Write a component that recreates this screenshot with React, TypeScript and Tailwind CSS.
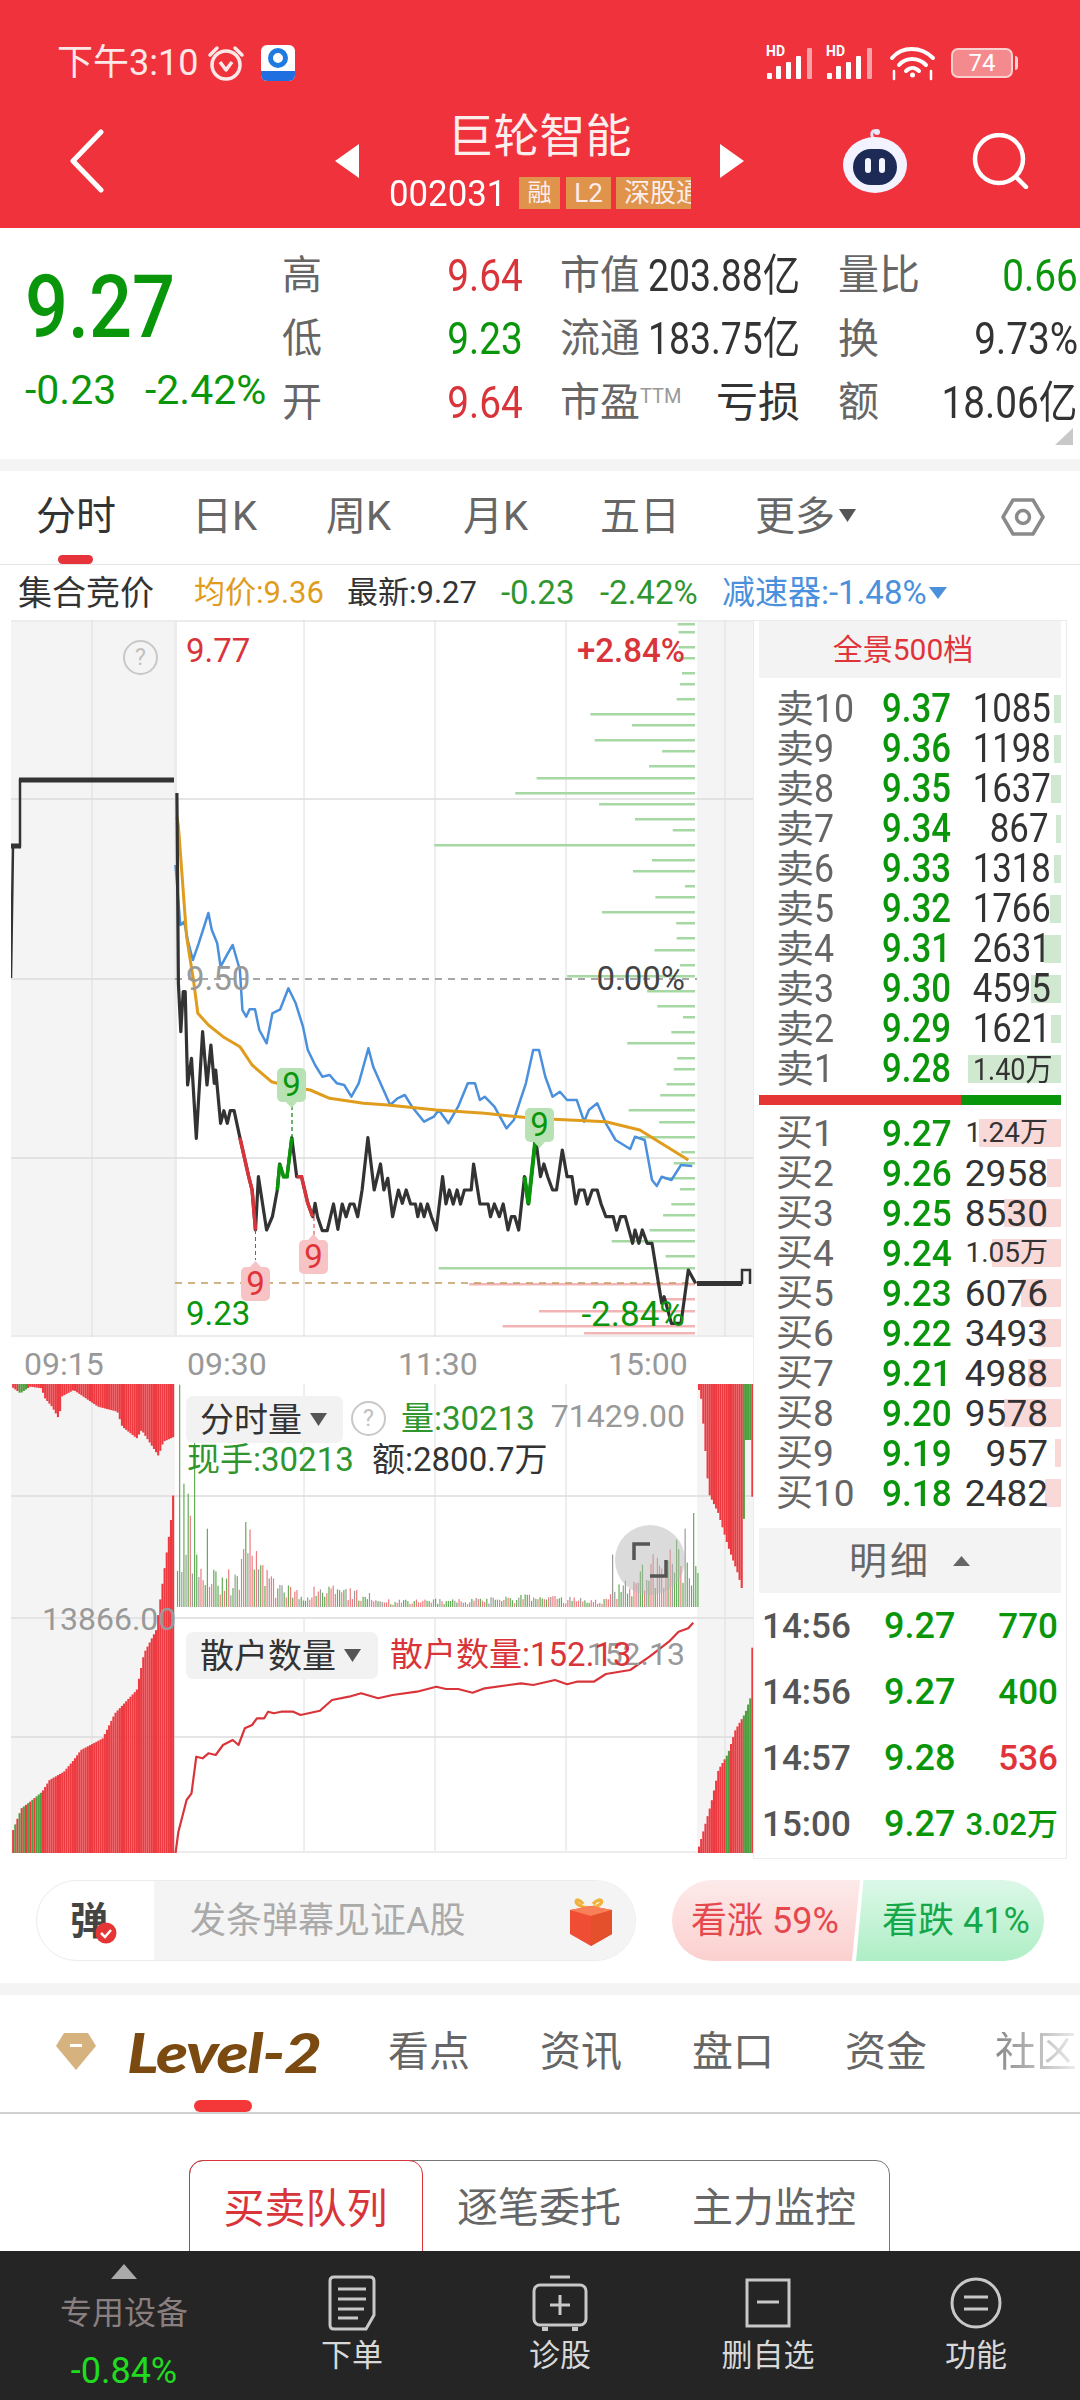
import clsx from "clsx";
import type { ReactNode } from "react";

type Pt = [number, number];

const RED = "text-[#e0343a]";
const GREEN = "text-[#0a960a]";

// chart points are read off the zoomed reference, so they get scaled back here
const priceX = (x: number) => x / 2.063 - 11;
const priceY = (y: number) => 330 + y / 3;
const toPrice = (pts: Pt[]) => pts.map(([x, y]) => `${priceX(x).toFixed(1)},${priceY(y).toFixed(1)}`).join(" ");
const lowY = (y: number) => y / 3 - 14;
const toLow = (pts: Pt[]) => pts.map(([x, y]) => `${priceX(x).toFixed(1)},${lowY(y).toFixed(1)}`).join(" ");

const blackLine: Pt[] = [[365,-471],[368,100],[373,245],[378,125],[382,125],[387,405],[395,325],[405,565],[418,245],[427,405],[435,285],[442,400],[445,360],[455,520],[462,482],[469,520],[475,482],[483,482],[495,563],[513,680],[520,720],[527,840],[533,680],[550,840],[562,800],[572,720],[577,642],[585,680],[592,680],[602,563],[612,680],[622,680],[635,760],[645,800],[650,760],[655,800],[665,842],[675,842],[688,762],[697,838],[706,762],[714,800],[722,762],[730,762],[738,800],[747,720],[759,563],[772,720],[785,642],[792,720],[800,685],[810,800],[822,720],[830,760],[838,720],[847,762],[857,762],[862,800],[868,762],[875,800],[882,762],[890,800],[900,840],[913,680],[920,762],[927,720],[935,762],[943,720],[950,762],[958,720],[972,720],[977,642],[990,762],[1007,762],[1012,800],[1020,762],[1030,800],[1038,762],[1048,840],[1055,800],[1062,800],[1070,840],[1082,680],[1090,762],[1105,563],[1115,680],[1122,642],[1130,680],[1140,720],[1148,720],[1160,600],[1170,680],[1180,680],[1188,762],[1195,720],[1205,720],[1212,762],[1222,720],[1232,720],[1240,762],[1250,800],[1265,800],[1272,840],[1280,800],[1290,800],[1305,880],[1310,840],[1318,880],[1325,840],[1335,880],[1345,880],[1365,1060],[1370,1040],[1385,1120],[1405,1120],[1420,960],[1435,1000]];
const blueLine: Pt[] = [[362,-255],[372,-75],[380,-85],[388,-25],[398,30],[410,-20],[430,-111],[437,-60],[448,-20],[455,50],[470,10],[480,-15],[495,60],[500,180],[508,200],[515,178],[526,178],[535,240],[550,280],[562,190],[578,178],[595,115],[610,160],[625,230],[635,300],[650,345],[665,380],[680,375],[695,400],[710,405],[725,440],[740,400],[760,295],[770,350],[785,400],[805,465],[820,445],[835,435],[850,470],[875,515],[895,500],[905,480],[925,520],[945,470],[965,400],[980,400],[990,450],[1000,440],[1020,470],[1045,535],[1060,510],[1085,400],[1100,300],[1112,300],[1125,380],[1140,440],[1155,425],[1170,450],[1190,450],[1205,515],[1215,480],[1232,460],[1250,520],[1270,570],[1300,597],[1310,560],[1330,570],[1345,690],[1355,708],[1365,680],[1385,690],[1405,645],[1428,648]];
const avgLine: Pt[] = [[365,-400],[368,-372],[385,-40],[400,100],[408,190],[430,225],[460,260],[495,290],[520,345],[560,395],[600,410],[640,420],[680,445],[750,460],[800,465],[900,480],[1000,490],[1100,505],[1250,515],[1320,540],[1370,585],[1420,630]];
const retailLine: Pt[] = [[362,1450],[368,1385],[385,1290],[395,1270],[405,1160],[418,1165],[430,1150],[445,1155],[460,1125],[480,1110],[492,1125],[505,1075],[520,1065],[530,1045],[545,1045],[553,1025],[565,1030],[580,1025],[605,1025],[620,1035],[660,1022],[685,990],[720,980],[745,970],[780,985],[810,975],[860,965],[900,950],[920,957],[945,957],[975,968],[1000,955],[1050,945],[1075,940],[1100,945],[1145,930],[1170,943],[1190,935],[1225,935],[1250,912],[1300,900],[1340,860],[1380,815],[1400,785],[1420,775],[1430,758]];

// [left edge, y] of the thin depth bars, all ending at the same right edge
const greenDepth: Pt[] = [[1398,3],[1400,11],[1400,26],[1400,37],[1407,52],[1403,63],[1396,78],[1218,93],[1304,104],[1227,119],[1366,130],[1339,145],[1107,157],[1063,172],[1236,183],[1310,198],[1388,209],[896,224],[1345,239],[1306,250],[1413,265],[1352,276],[1242,291],[1395,302],[1396,317],[1350,329],[1403,344],[1170,355],[1335,370],[1356,385],[1409,396],[1385,411],[1294,422],[1397,437],[1390,448],[1375,463],[1362,474],[1297,489],[1360,501],[1320,516],[1405,531],[1390,542],[1370,557],[1403,568],[1385,583],[1368,594],[1340,609],[1262,620],[1373,635],[905,647]];
const redDepth: Pt[] = [[968,663],[1370,678],[1112,690],[1037,705],[1205,712]];

const interp = (table: Pt[], x: number) => {
  if (x <= table[0][0]) return table[0][1];
  for (let i = 1; i < table.length; i++) {
    if (x <= table[i][0]) {
      const [x0, y0] = table[i - 1];
      const [x1, y1] = table[i];
      return y0 + ((y1 - y0) * (x - x0)) / (x1 - x0);
    }
  }
  return table[table.length - 1][1];
};

let seed = 77;
const rnd = () => {
  seed = (seed * 16807) % 2147483647;
  return seed / 2147483647;
};

const volEnvelope: Pt[] = [[365,360],[400,250],[420,190],[450,120],[480,110],[510,250],[530,190],[560,90],[620,60],[680,70],[760,45],[810,22],[900,25],[1020,30],[1080,40],[1180,30],[1250,30],[1262,50],[1300,100],[1350,170],[1400,210],[1420,130]];
const volBars = Array.from({ length: 245 }, (_, i) => {
  const x = 365 + i * 4.4;
  const h = interp(volEnvelope, x) * (0.3 + 0.7 * rnd());
  const pick = rnd();
  return { x, h, color: pick < 0.42 ? "#62ad55" : pick < 0.78 ? "#ee7c7f" : "#9a9a9a" };
});
[[368,667],[378,370],[388,340],[400,547],[426,235],[507,255],[1262,157],[1430,282],[1411,235]].forEach(([x, h]) => {
  const bar = volBars.reduce((a, b) => (Math.abs(b.x - x) < Math.abs(a.x - x) ? b : a));
  bar.h = h;
  bar.color = x < 1000 || x === 1430 ? "#62ad55" : "#9a9a9a";
});

const leftTop: Pt[] = [[22,50],[40,70],[60,50],[85,55],[88,80],[105,110],[120,148],[125,80],[150,60],[170,80],[200,110],[240,125],[250,170],[280,205],[290,180],[310,225],[325,258],[335,215],[358,200]];
const leftBottom: Pt[] = [[25,1380],[42,1315],[60,1295],[85,1265],[100,1230],[130,1205],[150,1170],[165,1140],[210,1105],[235,1030],[280,960],[295,850],[320,780],[335,620],[350,460],[356,360]];
const rightTop: Pt[] = [[1440,60],[1445,90],[1460,370],[1480,430],[1500,530],[1520,610],[1530,665],[1535,210],[1548,210],[1550,380]];
const rightBottom: Pt[] = [[1440,1430],[1465,1300],[1480,1200],[1500,1150],[1515,1080],[1535,1030],[1548,975],[1553,620]];

const columns = (from: number, to: number) => {
  const out: number[] = [];
  for (let x = from; x <= to; x += 4.4) out.push(x);
  return out;
};

function GridLines({ rows }: { rows: number[] }) {
  return (
    <>
      {[81, 293, 424, 555, 714].map((x) => (
        <line key={x} x1={x} x2={x} y1="0" y2="100%" stroke="#dedede" strokeWidth="1" />
      ))}
      {rows.map((y) => (
        <line key={y} x1="0" x2="742" y1={y} y2={y} stroke="#dcdcdc" strokeWidth="1.5" />
      ))}
    </>
  );
}

function Marker({ x, y, up, green }: { x: number; y: number; up?: boolean; green?: boolean }) {
  // rounded tag with a small nib, the digit is laid over it as real text
  const fill = green ? "#b9e2b4" : "#f7c3c5";
  return (
    <g>
      <rect x={x} y={y} width="29" height="34" rx="5" fill={fill} />
      {up ? (
        <polygon points={`${x + 9},${y} ${x + 14.5},${y - 6} ${x + 20},${y}`} fill={fill} />
      ) : (
        <polygon points={`${x + 9},${y + 34} ${x + 14.5},${y + 40} ${x + 20},${y + 34}`} fill={fill} />
      )}
      <text x={x + 14.5} y={y + 28} textAnchor="middle" fontSize="33" fontFamily="Roboto, sans-serif" fill={green ? "#0a960a" : "#e0343a"}>
        9
      </text>
    </g>
  );
}

function PriceChart() {
  return (
    <svg className="absolute inset-0" width="742" height="717" viewBox="0 0 742 717">
      <rect x="0" y="0" width="164" height="717" fill="#f4f4f4" />
      <rect x="686" y="0" width="56" height="717" fill="#f4f4f4" />
      <rect x="0" y="0" width="742" height="2" fill="#ececec" />
      <rect x="0" y="715" width="742" height="2" fill="#ececec" />
      <rect x="163" y="0" width="3" height="717" fill="#ececec" />
      <GridLines rows={[179, 538]} />
      <line x1="0" x2="164" y1="359" y2="359" stroke="#dcdcdc" strokeWidth="1.5" />
      {greenDepth.map(([x, y]) => (
        <rect key={y} x={priceX(x)} y={y} width={684 - priceX(x)} height="2.5" fill="#a5d8a3" />
      ))}
      {redDepth.map(([x, y]) => (
        <rect key={y} x={priceX(x)} y={y} width={684 - priceX(x)} height="2.5" fill="#f3b4b6" />
      ))}
      <line x1="164" x2="686" y1="359" y2="359" stroke="#8a8a8a" strokeWidth="1.5" strokeDasharray="7 6" />
      <line x1="164" x2="686" y1="663" y2="663" stroke="#c49a60" strokeWidth="1.5" strokeDasharray="7 6" />

      <polyline points={toPrice(blueLine)} fill="none" stroke="#4a90dc" strokeWidth="2.5" strokeLinejoin="round" />
      <polyline points={toPrice(avgLine)} fill="none" stroke="#e09c1c" strokeWidth="3" strokeLinejoin="round" />
      <polyline points={toPrice(blackLine)} fill="none" stroke="#333333" strokeWidth="3.2" strokeLinejoin="round" />
      <polyline points={toPrice(blackLine.filter(([x]) => x >= 495 && x <= 527))} fill="none" stroke="#d8343a" strokeWidth="3.5" />
      <polyline points={toPrice(blackLine.filter(([x]) => x >= 612 && x <= 645))} fill="none" stroke="#d8343a" strokeWidth="3.5" />
      <polyline points={toPrice(blackLine.filter(([x]) => x >= 572 && x <= 602))} fill="none" stroke="#0a960a" strokeWidth="3.5" />
      <polyline points={toPrice(blackLine.filter(([x]) => x >= 1082 && x <= 1105))} fill="none" stroke="#0a960a" strokeWidth="4" />

      {/* pre-market auction steps */}
      <polyline points="0,358 2,226 9,226 9,160 163,160" fill="none" stroke="#333333" strokeWidth="2.5" />
      <rect x="8" y="157.5" width="155" height="5" fill="#333333" />
      <rect x="0" y="223.5" width="10" height="5" fill="#333333" />

      {/* after-hours stub */}
      <polyline points="686,663 731,663 731,650 739,650 739,664" fill="none" stroke="#333333" strokeWidth="2.5" />
      <rect x="686" y="661" width="45" height="5" fill="#333333" />

      <line x1="281" x2="281" y1="486" y2="517" stroke="#3a9a3a" strokeWidth="1.5" strokeDasharray="4 3" />
      <line x1="244.5" x2="244.5" y1="610" y2="640" stroke="#d8343a" strokeWidth="1" strokeDasharray="4 3" />
      <line x1="303" x2="303" y1="597" y2="616" stroke="#d8343a" strokeWidth="1" strokeDasharray="4 3" />
      <Marker x={266} y={448} green />
      <Marker x={514} y={488} green />
      <Marker x={230} y={647} up />
      <Marker x={288} y={620} up />
    </svg>
  );
}

function VolumeChart() {
  return (
    <svg className="absolute inset-0" width="742" height="469" viewBox="0 0 742 469">
      <rect x="0" y="0" width="164" height="469" fill="#f4f4f4" />
      <rect x="686" y="0" width="56" height="469" fill="#f4f4f4" />
      <GridLines rows={[112, 353]} />
      <rect x="0" y="233" width="742" height="2" fill="#e4e4e4" />
      <rect x="164" y="222" width="522" height="11" fill="#ffffff" />
      <rect x="0" y="467" width="742" height="2" fill="#ececec" />

      {columns(25, 356).map((x) => (
        <g key={x}>
          <rect x={priceX(x)} y="0" width="2.1" height={Math.max(lowY(interp(leftTop, x)), 0)} fill={x > 38 && x < 52 ? "#4f9e3f" : "#ec3a40"} />
          <rect x={priceX(x)} y={lowY(interp(leftBottom, x))} width="2.1" height={469 - lowY(interp(leftBottom, x))} fill={x < 86 && x % 3 > 1 ? "#4f9e3f" : "#ec3a40"} />
        </g>
      ))}
      {columns(1440, 1553).map((x) => (
        <g key={x}>
          <rect x={priceX(x)} y="0" width="2.1" height={Math.max(lowY(interp(rightTop, x)), 0)} fill={x > 1532 && x < 1549 ? "#4f9e3f" : "#ec3a40"} />
          <rect x={priceX(x)} y={lowY(interp(rightBottom, x))} width="2.1" height={469 - lowY(interp(rightBottom, x))} fill={(x > 1532 && x < 1549) || (x > 1495 && x < 1503) ? "#4f9e3f" : "#ec3a40"} />
        </g>
      ))}

      {volBars.map((b) => (
        <rect key={b.x} x={priceX(b.x)} y={223 - b.h / 3} width="1.2" height={b.h / 3} fill={b.color} />
      ))}
      <polyline points={toLow(retailLine)} fill="none" stroke="#d8343a" strokeWidth="2.2" strokeLinejoin="round" />
    </svg>
  );
}

function Caret({ className }: { className?: string }) {
  return (
    <svg width="17" height="13" viewBox="0 0 17 13" className={className}>
      <polygon points="0,0 17,0 8.5,13" fill="#555555" />
    </svg>
  );
}

function Help({ className }: { className?: string }) {
  return (
    <span className={clsx("flex h-[35px] w-[35px] items-center justify-center rounded-full border-[2.5px] border-[#c8c8c8] text-[23px] leading-none text-[#c0c0c0]", className)}>
      ?
    </span>
  );
}

function Signal() {
  return (
    <div className="relative h-[32px] w-[50px]">
      <span className="absolute left-0 top-[-3px] text-[14px] font-bold leading-none text-white">HD</span>
      <svg className="absolute inset-0" width="50" height="32" viewBox="0 0 50 32">
        <rect x="1" y="26" width="5" height="6" rx="1" fill="#fff" />
        <rect x="10" y="19" width="5" height="13" rx="1" fill="#fff" />
        <rect x="20" y="15" width="5" height="17" rx="1" fill="#fff" />
        <rect x="30" y="9" width="5" height="23" rx="1" fill="#fff" />
        <rect x="41" y="1" width="5" height="31" rx="1" fill="#ffffff" opacity="0.55" />
      </svg>
    </div>
  );
}

function StatusIcons() {
  return (
    <div className="flex items-center">
      <Signal />
      <div className="ml-[10px]">
        <Signal />
      </div>
      <svg className="ml-[13px]" width="48" height="36" viewBox="0 0 48 36" fill="none" stroke="#fff" strokeWidth="4" strokeLinecap="round">
        <path d="M3 13 C13 1 32 1 44 13" />
        <path d="M10 20 C17 12 29 12 37 20" />
        <path d="M17 26 C21 22 26 22 30 26" />
        <circle cx="23.5" cy="30" r="2.5" fill="#fff" stroke="none" />
        <path d="M5 26v8M42 26v8" strokeWidth="2.5" />
      </svg>
      <div className="ml-[14px] flex items-center">
        <div className="flex h-[30px] w-[62px] items-center justify-center rounded-[7px] border-[2.5px] border-[#f8d0d0] bg-[#f58a8e] text-[24px] leading-none text-white">74</div>
        <span className="ml-[2px] h-[14px] w-[3px] rounded-r bg-[#f8d0d0]" />
      </div>
    </div>
  );
}

function AlarmIcon() {
  return (
    <svg width="38" height="36" viewBox="0 0 38 36" fill="none" stroke="#fde8e8" strokeWidth="3.5">
      <circle cx="19" cy="20" r="14" />
      <path d="M3 10 L10 3 M35 10 L28 3" strokeLinecap="round" />
      <path d="M13 17 L19 25 L25 17" strokeWidth="3.5" strokeLinejoin="round" />
    </svg>
  );
}

function AppIcon() {
  return (
    <div className="relative flex h-[36px] w-[34px] flex-col overflow-hidden rounded-[6px] bg-white">
      <svg width="34" height="26" viewBox="0 0 34 26">
        <circle cx="17" cy="13" r="7.5" fill="none" stroke="#1f7be0" strokeWidth="5" />
      </svg>
      <div className="h-[10px] bg-[#1f6fe0]" />
    </div>
  );
}

function Robot() {
  return (
    <svg width="68" height="66" viewBox="0 0 68 66">
      <path d="M33 12 C29 6 31 2 35 3" fill="none" stroke="#dfe3f8" strokeWidth="3" />
      <circle cx="36" cy="4" r="3" fill="#e8e9fb" />
      <ellipse cx="34" cy="37" rx="32" ry="28" fill="#f2f3ff" />
      <rect x="12" y="21" width="44" height="36" rx="18" fill="#1d2a55" />
      <rect x="24" y="30" width="6" height="15" rx="3" fill="#f3f5ff" />
      <rect x="38" y="30" width="6" height="15" rx="3" fill="#f3f5ff" />
    </svg>
  );
}

function SellRow({ label, price, vol, bar, small }: { label: string; price: string; vol: string; bar: number; small?: boolean }) {
  return (
    <div className="relative flex h-[40px] items-center pl-[17px] pr-[13px]">
      <span className="absolute bottom-[6px] right-0 h-[28px] bg-[#cfe8cf]" style={{ width: bar }} />
      <span className="relative w-[106px] shrink-0 whitespace-nowrap text-[38px] leading-none text-[#666666]">
        {label.slice(0, 1)}
        <span className="inline-block origin-left scale-x-[.94]">{label.slice(1)}</span>
      </span>
      <span className={clsx("relative inline-block shrink-0 origin-left scale-x-[.87] text-[40px] font-medium leading-none", GREEN)}>{price}</span>
      <span className={clsx("relative ml-auto inline-block shrink-0 origin-right scale-x-[.87] whitespace-nowrap leading-none text-[#333333]", small ? "-mr-[0px] text-[31px]" : "text-[40px]")}>{vol}</span>
    </div>
  );
}

function BuyRow({ label, price, vol, bar, small }: { label: string; price: string; vol: string; bar: number; small?: boolean }) {
  return (
    <div className="relative flex h-[40px] items-center pl-[17px] pr-[13px]">
      <span className="absolute bottom-[6px] right-0 h-[28px] bg-[#f9d8d8]" style={{ width: bar }} />
      <span className="relative w-[106px] shrink-0 whitespace-nowrap text-[37px] leading-none text-[#666666]">{label}</span>
      <span className={clsx("relative -mr-[12px] inline-block shrink-0 origin-left scale-x-[.95] text-[37px] font-medium leading-none", GREEN)}>{price}</span>
      <span className={clsx("relative ml-auto shrink-0 whitespace-nowrap leading-none text-[#333333]", small ? "text-[28px]" : "text-[37px]")}>{vol}</span>
    </div>
  );
}

function TradeRow({ time, price, vol, up, small }: { time: string; price: string; vol: string; up?: boolean; small?: boolean }) {
  return (
    <div className="flex h-[66px] items-center pl-[3px] pr-[3px]">
      <span className="w-[122px] text-[35px] font-medium leading-none text-[#555555]">{time}</span>
      <span className={clsx("text-[36px] font-medium leading-none", GREEN)}>{price}</span>
      <span className={clsx("ml-auto font-medium leading-none", up ? RED : GREEN, small ? "text-[31px]" : "text-[35px]")}>{vol}</span>
    </div>
  );
}

function OrderBook() {
  const sells: [string, string, string, number, boolean?][] = [
    ["卖10", "9.37", "1085", 7],
    ["卖9", "9.36", "1198", 7],
    ["卖8", "9.35", "1637", 10],
    ["卖7", "9.34", "867", 5],
    ["卖6", "9.33", "1318", 7],
    ["卖5", "9.32", "1766", 11],
    ["卖4", "9.31", "2631", 17],
    ["卖3", "9.30", "4595", 30],
    ["卖2", "9.29", "1621", 10],
    ["卖1", "9.28", "1.40万", 93, true],
  ];
  const buys: [string, string, string, number, boolean?][] = [
    ["买1", "9.27", "1.24万", 82, true],
    ["买2", "9.26", "2958", 14],
    ["买3", "9.25", "8530", 57],
    ["买4", "9.24", "1.05万", 69, true],
    ["买5", "9.23", "6076", 40],
    ["买6", "9.22", "3493", 23],
    ["买7", "9.21", "4988", 33],
    ["买8", "9.20", "9578", 57],
    ["买9", "9.19", "957", 6],
    ["买10", "9.18", "2482", 16],
  ];
  return (
    <div className="h-[1240px] w-[314px]">
      <div className="h-[1239px] border border-[#ececec] px-[5px]">
        <div className="flex h-[57px] items-center justify-center bg-[#f3f3f3] pr-[14px] text-[30px] leading-none text-[#e0343a]">全景500档</div>
        <div className="mt-[11px]">
          {sells.map(([label, price, vol, bar, small]) => (
            <SellRow key={label} label={label} price={small ? price : price} vol={vol} bar={bar} small={small} />
          ))}
        </div>
        <div className="mt-[6px] flex h-[10px]">
          <div className="w-[202px] bg-[#e53535]" />
          <div className="flex-1 bg-[#0a960a]" />
        </div>
        <div className="mt-[8px]">
          {buys.map(([label, price, vol, bar, small]) => (
            <BuyRow key={label} label={label} price={price} vol={vol} bar={bar} small={small} />
          ))}
        </div>
        <div className="mt-[15px] flex h-[65px] items-center bg-[#f3f3f3] pl-[90px]">
          <span className="text-[38px] leading-none tracking-[3px] text-[#666666]">明细</span>
          <svg className="ml-[22px]" width="17" height="10" viewBox="0 0 17 10">
            <polygon points="8.5,0 17,10 0,10" fill="#666666" />
          </svg>
        </div>
        <TradeRow time="14:56" price="9.27" vol="770" />
        <TradeRow time="14:56" price="9.27" vol="400" />
        <TradeRow time="14:57" price="9.28" vol="536" up />
        <TradeRow time="15:00" price="9.27" vol="3.02万" small />
      </div>
    </div>
  );
}

function QuoteRow({ a, aVal, aClass, b, c, cVal, cClass, bRight }: { a: string; aVal: string; aClass: string; b: ReactNode; bRight: ReactNode; c: string; cVal: string; cClass: string }) {
  return (
    <div className="flex h-[63.5px] items-center">
      <div className="flex w-[241px] items-center justify-between">
        <span className="text-[40px] leading-none text-[#666666]">{a}</span>
        <span className={clsx("inline-block origin-right scale-x-[.88] text-[44px] leading-none", aClass)}>{aVal}</span>
      </div>
      <div className="ml-[37px] flex w-[240px] items-center justify-between">
        {b}
        {bRight}
      </div>
      <div className="ml-[38px] flex w-[240px] items-center justify-between">
        <span className="whitespace-nowrap text-[41px] leading-none text-[#666666]">{c}</span>
        <span className={clsx("inline-block shrink-0 origin-right scale-x-[.88] whitespace-nowrap text-[44px] leading-none", cClass)}>{cVal}</span>
      </div>
    </div>
  );
}

const bigVal = "-ml-[40px] inline-block shrink-0 origin-right scale-x-[.85] whitespace-nowrap text-[44px] leading-none text-[#333333]";
const midLabel = "shrink-0 whitespace-nowrap text-[40px] leading-none text-[#666666]";

function Header() {
  return (
    <header className="h-[228px] bg-[#f0323c]">
      <div className="flex h-[95px] items-center justify-between pl-[57px] pr-[62px] pt-[30px]">
        <div className="flex items-center">
          <span className="inline-block w-[140px] whitespace-nowrap text-[36px] leading-none text-[#fde8e8]">下午3:10</span>
          <span className="ml-[10px]">
            <AlarmIcon />
          </span>
          <span className="ml-[16px]">
            <AppIcon />
          </span>
        </div>
        <StatusIcons />
      </div>
      <div className="relative h-[133px]">
        <svg className="absolute left-[68px] top-[34px]" width="38" height="64" viewBox="0 0 38 64" fill="none" stroke="#fff" strokeWidth="5" strokeLinecap="round" strokeLinejoin="round">
          <path d="M33 3 L5 32 L33 61" />
        </svg>
        <svg className="absolute left-[335px] top-[49px]" width="24" height="34" viewBox="0 0 24 34">
          <polygon points="24,0 24,34 0,17" fill="#fff" />
        </svg>
        <svg className="absolute left-[720px] top-[49px]" width="24" height="34" viewBox="0 0 24 34">
          <polygon points="0,0 0,34 24,17" fill="#fff" />
        </svg>
        <div className="flex flex-col items-center">
          <span className="mt-[18px] pr-[1px] text-[46px] leading-none text-[#fdeeee]">巨轮智能</span>
          <div className="ml-[389px] mt-[18px] flex h-[32px] w-[302px] items-center self-start">
            <span className="inline-block w-[130px] origin-left scale-x-[.94] text-[37px] leading-none text-white">002031</span>
            <span className="flex h-[32px] w-[41px] items-center justify-center bg-[#e0934a] text-[24px] leading-none text-[#fdeeee]">融</span>
            <span className="ml-[6px] flex h-[32px] w-[45px] items-center justify-center bg-[#e0934a] text-[26px] leading-none text-[#fdeeee]">L2</span>
            <span className="ml-[5px] h-[32px] w-[75px] overflow-hidden whitespace-nowrap bg-[#e0934a] pl-[8px] text-[26px] leading-[32px] text-[#fdeeee]">深股通</span>
          </div>
        </div>
        <div className="absolute left-[841px] top-[33px]">
          <Robot />
        </div>
        <svg className="absolute left-[972px] top-[38px]" width="60" height="56" viewBox="0 0 60 56" fill="none" stroke="#fff" strokeWidth="4.5" strokeLinecap="round">
          <circle cx="27" cy="26" r="24" />
          <path d="M44 44 L54 54" />
        </svg>
      </div>
    </header>
  );
}

function Quote() {
  return (
    <section className="flex h-[231px] pl-[25px]">
      <div className="w-[257px] pt-[35px]">
        <div className={clsx("inline-block origin-left scale-x-[.86] text-[88px] font-medium leading-none", GREEN)}>9.27</div>
        <div className={clsx("mt-[19px] flex whitespace-nowrap text-[41px] leading-none", GREEN)}>
          <span className="w-[120px]">-0.23</span>
          <span>-2.42%</span>
        </div>
      </div>
      <div className="pt-[16px]">
        <QuoteRow
          a="高"
          aVal="9.64"
          aClass="text-[#d8343a]"
          b={<span className={midLabel}>市值</span>}
          bRight={<span className={bigVal}>203.88亿</span>}
          c="量比"
          cVal="0.66"
          cClass={GREEN}
        />
        <QuoteRow
          a="低"
          aVal="9.23"
          aClass={GREEN}
          b={<span className={midLabel}>流通</span>}
          bRight={<span className={bigVal}>183.75亿</span>}
          c="换"
          cVal="9.73%"
          cClass="text-[#333333]"
        />
        <QuoteRow
          a="开"
          aVal="9.64"
          aClass="text-[#d8343a]"
          b={
            <span className="flex shrink-0 items-start whitespace-nowrap text-[40px] leading-none text-[#666666]">
              市盈<span className="mt-[3px] inline-block text-[20px] leading-none text-[#999999]">TTM</span>
            </span>
          }
          bRight={<span className="whitespace-nowrap text-[42px] leading-none text-[#333333]">亏损</span>}
          c="额"
          cVal="18.06亿"
          cClass="text-[#333333]"
        />
      </div>
      <div className="relative">
        <svg className="absolute left-[-23px] top-[200px]" width="18" height="17" viewBox="0 0 18 17">
          <polygon points="18,0 18,17 0,17" fill="#c8c8c8" />
        </svg>
      </div>
    </section>
  );
}

function PeriodTabs() {
  return (
    <nav className="relative flex h-[94px] border-b border-[#e5e5e5] pl-[36px] pt-[26px] text-[40px] leading-none text-[#666666]">
      <span className="w-[156px] text-[#333333]">分时</span>
      <span className="w-[134px]">日K</span>
      <span className="w-[137px]">周K</span>
      <span className="w-[137px]">月K</span>
      <span className="w-[155px]">五日</span>
      <span className="flex items-start">
        更多
        <Caret className="ml-[4px] mt-[12px]" />
      </span>
      <span className="absolute bottom-0 left-[58px] h-[9px] w-[35px] rounded-full bg-[#e6323a]" />
      <svg className="absolute left-[1001px] top-[24px]" width="44" height="44" viewBox="0 0 44 44" fill="none" stroke="#8a8a8a" strokeWidth="3.5">
        <polygon points="12,5 32,5 42,22 32,39 12,39 2,22" strokeLinejoin="round" />
        <circle cx="22" cy="22" r="6.5" />
      </svg>
    </nav>
  );
}

function InfoRow() {
  return (
    <div className="flex h-[55px] items-center pl-[18px] leading-none">
      <span className="w-[176px] text-[34px] text-[#333333]">集合竞价</span>
      <span className="w-[153px] text-[31px] text-[#e09c1c]">均价:9.36</span>
      <span className="w-[154px] text-[31px] text-[#333333]">最新:9.27</span>
      <span className="w-[99px] text-[33px] text-[#2f962f]">-0.23</span>
      <span className="w-[122px] text-[33px] text-[#2f962f]">-2.42%</span>
      <span className="whitespace-nowrap text-[33px] text-[#4a90dc]">减速器:-1.48%</span>
      <svg className="ml-[2px]" width="18" height="12" viewBox="0 0 18 12">
        <polygon points="0,0 18,0 9,12" fill="#4a90dc" />
      </svg>
    </div>
  );
}

function Charts() {
  return (
    <section className="flex h-[1240px] pl-[11px]">
      <div className="w-[742px]">
        <div className="relative h-[717px]">
          <PriceChart />
          <span className="absolute left-[175px] top-[14px] text-[33px] leading-none text-[#d8343a]">9.77</span>
          <span className="absolute right-[68px] top-[14px] text-[33px] font-medium leading-none text-[#d8343a]">+2.84%</span>
          <Help className="absolute left-[112px] top-[20px]" />
          <span className="absolute left-[175px] top-[342px] text-[33px] leading-none text-[#999999]">9.50</span>
          <span className="absolute right-[68px] top-[342px] text-[33px] leading-none text-[#444444]">0.00%</span>
          <span className={clsx("absolute left-[175px] top-[677px] text-[33px] leading-none", GREEN)}>9.23</span>
          <span className={clsx("absolute right-[68px] top-[677px] text-[35px] leading-none", GREEN)}>-2.84%</span>
        </div>
        <div className="relative h-[47px] text-[32px] leading-none text-[#999999]">
          <span className="absolute left-[13px] top-[11px]">09:15</span>
          <span className="absolute left-[176px] top-[11px]">09:30</span>
          <span className="absolute left-[387px] top-[11px]">11:30</span>
          <span className="absolute left-[597px] top-[11px]">15:00</span>
        </div>
        <div className="relative h-[469px]">
          <VolumeChart />
          <div className="absolute left-[175px] top-[12px] flex h-[47px] w-[157px] items-center rounded-[7px] bg-[#f2f2f2] pl-[14px] text-[34px] leading-none text-[#333333]">
            分时量
            <Caret className="ml-[8px]" />
          </div>
          <Help className="absolute left-[340px] top-[17px]" />
          <span className="absolute left-[390px] top-[18px] text-[33px] leading-none text-[#2f962f]">量:30213</span>
          <span className="absolute right-[68px] top-[16px] text-[32px] leading-none text-[#999999]">71429.00</span>
          <span className="absolute left-[176px] top-[59px] text-[33px] leading-none text-[#2f962f]">现手:30213</span>
          <span className="absolute left-[361px] top-[59px] text-[33px] leading-none text-[#333333]">额:2800.7万</span>
          <div className="absolute left-[604px] top-[141px] flex h-[70px] w-[70px] items-center justify-center rounded-full bg-[#b8b8b8]/50">
            <svg width="36" height="36" viewBox="0 0 36 36" fill="none" stroke="#555555" strokeWidth="3.5">
              <path d="M2 18 V2 H18" />
              <path d="M34 18 V34 H18" />
            </svg>
          </div>
          <span className="absolute left-[31px] top-[219px] text-[32px] leading-none text-[#999999]">13866.00</span>
          <div className="absolute left-[175px] top-[248px] flex h-[47px] w-[192px] items-center rounded-[7px] bg-[#f2f2f2] pl-[14px] text-[34px] leading-none text-[#333333]">
            散户数量
            <Caret className="ml-[8px]" />
          </div>
          <span className="absolute right-[68px] top-[254px] text-[32px] leading-none text-[#999999]">152.13</span>
          <span className="absolute left-[379px] top-[254px] text-[33px] leading-none text-[#d8343a]">散户数量:152.13</span>
        </div>
      </div>
      <OrderBook />
    </section>
  );
}

function CommentBar() {
  return (
    <section className="flex h-[123px] pl-[36px] pt-[20px]">
      <div className="flex h-[81px] w-[600px] overflow-hidden rounded-full border border-[#ececec]">
        <div className="relative flex w-[117px] items-center pl-[33px] text-[38px] font-bold leading-none text-[#444444]">
          弹
          <svg className="absolute left-[58px] top-[41px]" width="22" height="22" viewBox="0 0 22 22">
            <circle cx="11" cy="11" r="10.5" fill="#e53535" />
            <path d="M6 11 L10 15 L16 8" fill="none" stroke="#fff" strokeWidth="2.5" />
          </svg>
        </div>
        <div className="flex flex-1 items-center bg-[#f4f4f4] pl-[36px] text-[36px] leading-none text-[#aaaaaa]">
          发条弹幕见证A股
          <svg className="ml-auto mr-[21px]" width="46" height="50" viewBox="0 0 46 50">
            <path d="M15 8 C8 -2 2 10 21 12 C40 10 34 -2 25 8" fill="none" stroke="#f0b23a" strokeWidth="3.5" />
            <polygon points="2,14 23,10 44,14 44,38 23,50 2,38" fill="#ef4d34" />
            <polygon points="2,14 23,20 44,14 23,10" fill="#f98058" />
            <polygon points="23,20 44,14 44,38 23,50" fill="#e5502c" />
          </svg>
        </div>
      </div>
      <div className="ml-[36px] flex h-[81px]">
        <div className="flex h-[81px] w-[188px] items-center rounded-l-full bg-gradient-to-b from-[#fdeaea] to-[#fbd0cf] pl-[19px] text-[36px] leading-none text-[#e5484d] [clip-path:polygon(0_0,100%_0,95.7%_100%,0_100%)]">
          看涨 59%
        </div>
        <div className="-ml-[4px] flex h-[81px] w-[188px] items-center rounded-r-full bg-gradient-to-b from-[#dcf8e8] to-[#aeeec5] pl-[26px] text-[36px] leading-none text-[#15a84a] [clip-path:polygon(4%_0,100%_0,100%_100%,0_100%)]">
          看跌 41%
        </div>
      </div>
    </section>
  );
}

function DetailTabs() {
  return (
    <nav className="relative flex h-[119px] items-start border-b-2 border-[#d0d0d0] pl-[56px] pt-[37px] text-[41px] leading-none text-[#666666]">
      <svg width="40" height="38" viewBox="0 0 40 38">
        <polygon points="8,1 32,1 40,14 20,38 0,14" fill="#d6b27e" />
        <rect x="14" y="12" width="12" height="3" fill="#ffffff" />
      </svg>
      <span className="ml-[31px] inline-block w-[261px] origin-left scale-x-[1.17] font-['Lato',sans-serif] text-[56px] font-black italic leading-[40px] tracking-[-1px] text-[#7a4a10]">Level-2</span>
      <span className="w-[152px]">看点</span>
      <span className="w-[152px]">资讯</span>
      <span className="w-[153px]">盘口</span>
      <span className="w-[150px]">资金</span>
      <span className="whitespace-nowrap bg-gradient-to-r from-[#888888] to-[#eeeeee] bg-clip-text text-transparent">社区</span>
      <span className="absolute bottom-0 left-[194px] h-[12px] w-[58px] rounded-full bg-[#f4383a]" />
    </nav>
  );
}

function QueueTabs() {
  return (
    <section className="h-[137px] overflow-hidden pl-[189px] pt-[46px]">
      <div className="flex h-[108px] w-[701px] rounded-[14px] border-[1.5px] border-[#777777] text-[41px] leading-none text-[#666666]">
        <div className="-m-[1.5px] flex h-[108px] w-[234px] items-start justify-center rounded-[14px] border-[1.5px] border-[#d8343a] pt-[28px] text-[#d8343a]">买卖队列</div>
        <span className="ml-[36px] mt-[27px] w-[235px]">逐笔委托</span>
        <span className="mt-[27px]">主力监控</span>
      </div>
    </section>
  );
}

function BottomItem({ label, children }: { label: string; children: ReactNode }) {
  return (
    <div className="flex w-[208px] flex-col items-center pt-[22px]">
      <div className="flex h-[60px] items-center justify-center">{children}</div>
      <span className="mt-[7px] text-[31px] leading-none text-[#d8d8d8]">{label}</span>
    </div>
  );
}

function BottomBar() {
  const stroke = { fill: "none", stroke: "#c8c8c8", strokeWidth: 3 };
  return (
    <footer className="flex h-[149px] bg-[#252525]">
      <div className="flex w-[248px] flex-col items-center pt-[13px]">
        <svg width="26" height="15" viewBox="0 0 26 15">
          <polygon points="13,0 26,15 0,15" fill="#aaaaaa" />
        </svg>
        <span className="mt-[18px] text-[32px] leading-none text-[#8a7f7f]">专用设备</span>
        <span className="mt-[24px] text-[36px] leading-none text-[#1fdc1f]">-0.84%</span>
      </div>
      <BottomItem label="下单">
        <svg width="48" height="56" viewBox="0 0 48 56" {...stroke}>
          <path d="M6 2 H42 Q46 2 46 6 V40 L38 54 H6 Q2 54 2 50 V6 Q2 2 6 2 Z" />
          <path d="M10 14 H38 M10 24 H38 M10 34 H36 M10 43 H30" />
        </svg>
      </BottomItem>
      <BottomItem label="诊股">
        <svg width="56" height="56" viewBox="0 0 56 56" {...stroke}>
          <path d="M18 2 H38" />
          <rect x="2" y="10" width="52" height="40" rx="6" />
          <path d="M28 20 V40 M18 30 H38" />
          <path d="M10 54 H16 M40 54 H46" strokeWidth="4" />
        </svg>
      </BottomItem>
      <BottomItem label="删自选">
        <svg width="46" height="50" viewBox="0 0 46 50" {...stroke}>
          <rect x="2" y="2" width="42" height="46" />
          <path d="M12 24 H34" />
        </svg>
      </BottomItem>
      <BottomItem label="功能">
        <svg width="52" height="52" viewBox="0 0 52 52" {...stroke}>
          <circle cx="26" cy="26" r="24" />
          <path d="M14 20 H38 M14 32 H38" />
        </svg>
      </BottomItem>
    </footer>
  );
}

export default function App() {
  return (
    <main className="relative h-[2400px] w-[1080px] overflow-hidden bg-white font-['Roboto','Noto_Sans_CJK_SC',sans-serif]">
      <Header />
      <Quote />
      <div className="h-[12px] bg-[#f4f4f4]" />
      <PeriodTabs />
      <InfoRow />
      <Charts />
      <CommentBar />
      <div className="h-[12px] bg-[#f4f4f4]" />
      <DetailTabs />
      <QueueTabs />
      <BottomBar />
    </main>
  );
}
